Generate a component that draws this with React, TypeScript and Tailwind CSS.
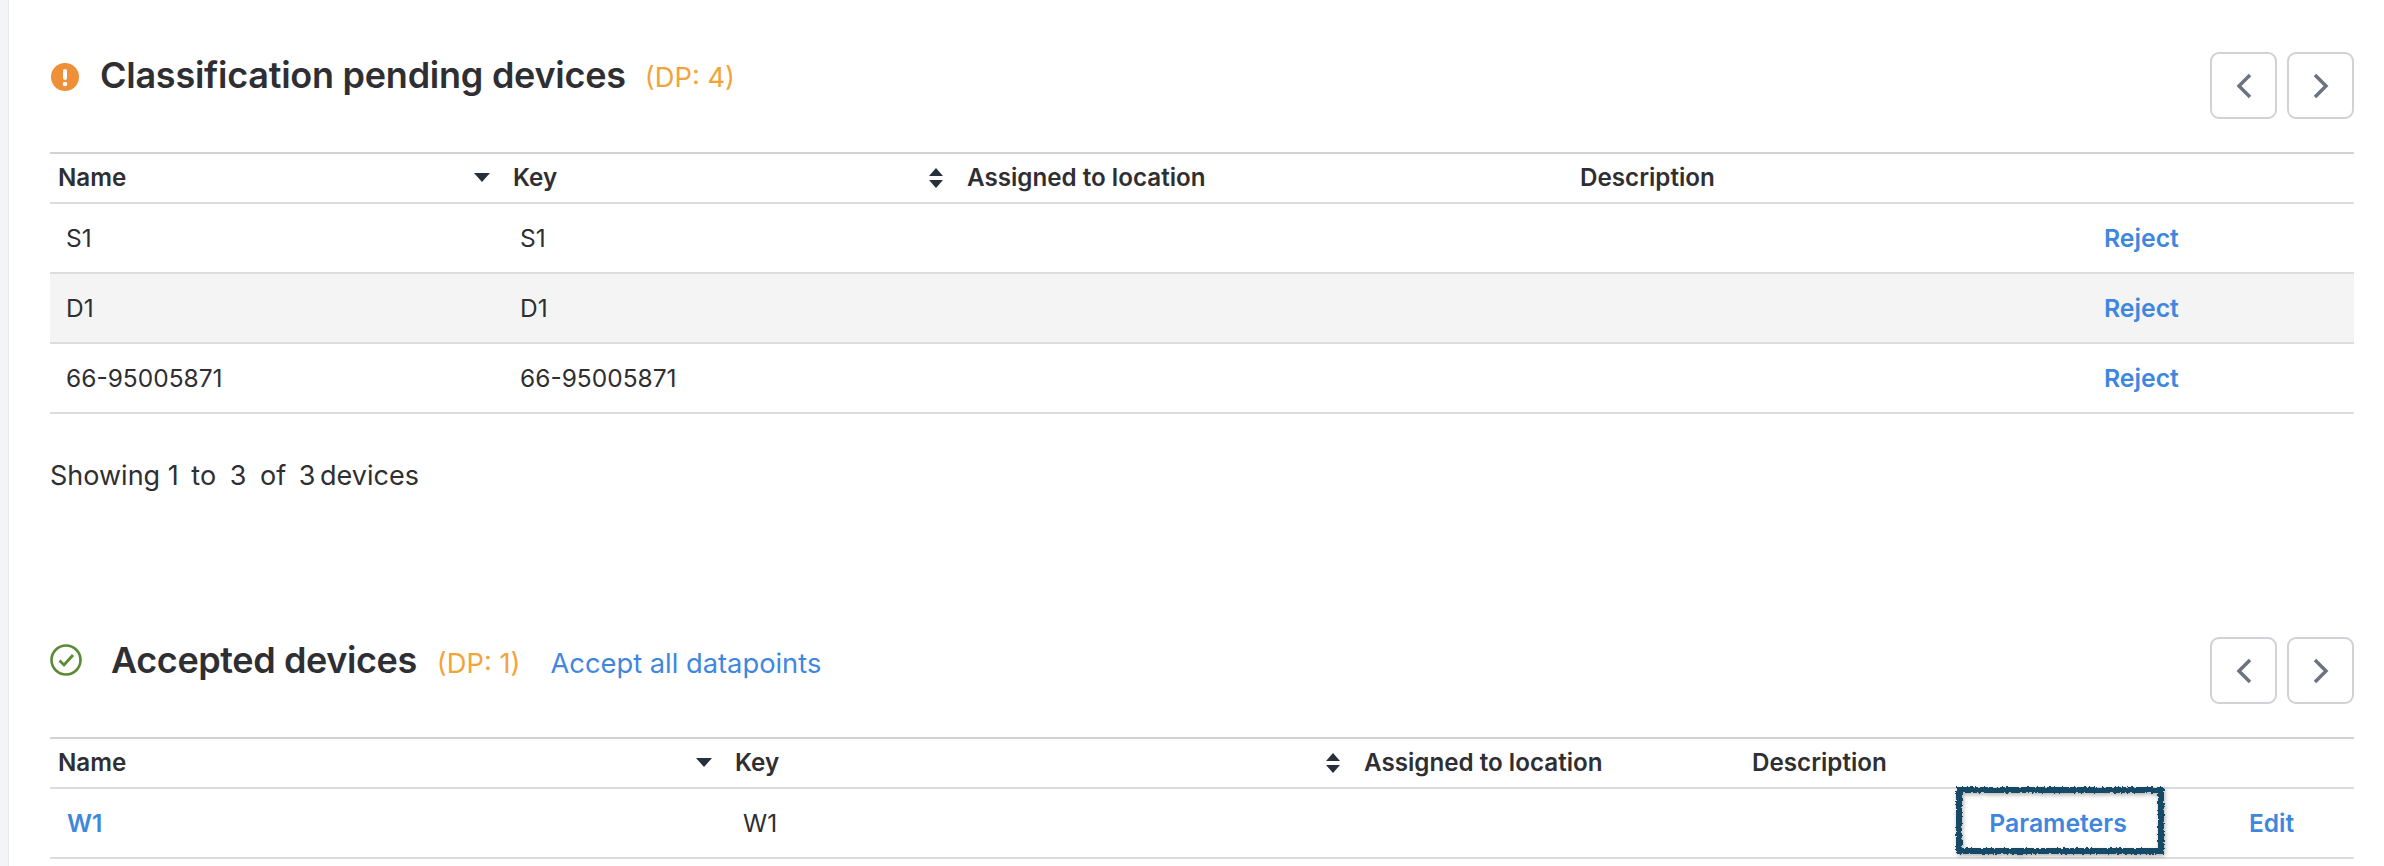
const font = "font-['Inter',sans-serif]";

function Pager() {
  return (
    <div className="flex gap-[10px]">
      <button className="w-[67px] h-[67px] flex items-center justify-center rounded-[9px] border-2 border-[#d1d1d6] bg-white">
        <svg width="18" height="26" viewBox="0 0 18 26" fill="none" stroke="#6b7280" strokeWidth="3.5">
          <path d="M15 2 4 13l11 11" />
        </svg>
      </button>
      <button className="w-[67px] h-[67px] flex items-center justify-center rounded-[9px] border-2 border-[#d1d1d6] bg-white">
        <svg width="18" height="26" viewBox="0 0 18 26" fill="none" stroke="#6b7280" strokeWidth="3.5">
          <path d="M3 2l11 11L3 24" />
        </svg>
      </button>
    </div>
  );
}

function CaretDown() {
  return (
    <svg width="16" height="9" viewBox="0 0 16 9" className="shrink-0">
      <path d="M0 0h16L8 9z" fill="#27303a" />
    </svg>
  );
}

function CaretBoth() {
  return (
    <svg width="16" height="20" viewBox="0 0 16 20" className="shrink-0">
      <path d="M8 0l7 8H1zM1 12h14l-7 8z" fill="#27303a" />
    </svg>
  );
}

function HeadCell({ label, sort }: { label: string; sort?: "down" | "both" }) {
  return (
    <div className="flex items-center justify-between pl-[8px] pr-[15px]">
      <span>{label}</span>
      {sort === "down" && <CaretDown />}
      {sort === "both" && <CaretBoth />}
    </div>
  );
}

const pendingCols = "grid-cols-[455px_454px_613px_532px_250px]";
const acceptedCols = "grid-cols-[677px_629px_388px_212px_209px_189px]";
const pendingRows = [
  { name: "S1", shaded: false },
  { name: "D1", shaded: true },
  { name: "66-95005871", shaded: false },
];

export default function App() {
  return (
    <div className={`${font} flex h-[866px] overflow-hidden bg-white text-[#2f2f33]`}>
      <div className="w-[9px] shrink-0 bg-[#f3f4f6] border-r border-[#e9eaee]" />
      <main className="flex-1 pl-[41px] pr-[30px] pt-[52px]">
        {/* Classification pending */}
        <section>
          <div className="flex items-start justify-between h-[67px]">
            <div className="flex items-center h-[46px]">
              <svg width="28" height="28" viewBox="0 0 28 28" className="ml-[1px] mt-[3px]">
                <circle cx="14" cy="14" r="14" fill="#ef9038" />
                <rect x="12" y="6" width="4" height="11" rx="2" fill="#fff" />
                <circle cx="14" cy="21" r="2.3" fill="#fff" />
              </svg>
              <h2 className="ml-[21px] text-[36px] font-semibold tracking-[-0.25px]">Classification pending devices</h2>
              <span className="ml-[19px] mt-[6px] text-[27.3px] text-[#f2a43a]">(DP: 4)</span>
            </div>
            <Pager />
          </div>
          <div className="mt-[33px] border-t-2 border-[#d1d1d6] text-[24.5px]">
            <div className={`grid ${pendingCols} h-[50px] items-center border-b-2 border-[#dcdcdf] text-[24.2px] font-semibold`}>
              <HeadCell label="Name" sort="down" />
              <HeadCell label="Key" sort="both" />
              <HeadCell label="Assigned to location" />
              <HeadCell label="Description" />
              <div />
            </div>
            {pendingRows.map((row) => (
              <div
                key={row.name}
                className={`grid ${pendingCols} h-[70px] items-center border-b-2 border-[#dcdcdf] ${row.shaded ? "bg-[#f4f4f5]" : ""}`}
              >
                <div className="pl-[16px]">{row.name}</div>
                <div className="pl-[15px]">{row.name}</div>
                <div />
                <div />
                <a className="mt-[2px] text-[24.8px] font-semibold text-[#3f87de]">Reject</a>
              </div>
            ))}
          </div>
          <p className="mt-[46px] text-[27px] leading-[32px]">
            Showing 1<span className="ml-[5px]"> to</span>
            <span className="ml-[6px]"> 3</span>
            <span className="ml-[6px]"> of</span>
            <span className="ml-[5px]"> 3</span>
            <span className="ml-[-3px]"> devices</span>
          </p>
        </section>

        {/* Accepted */}
        <section className="mt-[145px]">
          <div className="flex items-start justify-between h-[67px]">
            <div className="flex items-center h-[46px]">
              <svg width="32" height="32" viewBox="0 0 32 32" fill="none" stroke="#5b8a35" strokeWidth="2.6">
                <circle cx="16" cy="16" r="14.5" />
                <path d="M9.5 16.5l4.5 4.5 9-10" strokeWidth="2.8" />
              </svg>
              <h2 className="ml-[29px] text-[36px] font-semibold tracking-[-0.4px]">Accepted devices</h2>
              <span className="ml-[20px] mt-[8px] text-[27.3px] text-[#f2a43a]">(DP: 1)</span>
              <a className="ml-[30px] mt-[8px] text-[27.3px] text-[#3f87de]">Accept all datapoints</a>
            </div>
            <Pager />
          </div>
          <div className="mt-[33px] border-t-2 border-[#d1d1d6] text-[24.5px]">
            <div className={`grid ${acceptedCols} h-[50px] items-center border-b-2 border-[#dcdcdf] text-[24.2px] font-semibold`}>
              <HeadCell label="Name" sort="down" />
              <HeadCell label="Key" sort="both" />
              <HeadCell label="Assigned to location" />
              <HeadCell label="Description" />
              <div />
              <div />
            </div>
            <div className={`relative grid ${acceptedCols} h-[70px] items-center border-b-2 border-[#dcdcdf]`}>
              <a className="pl-[17px] font-semibold text-[#3f87de]">W1</a>
              <div className="pl-[16px]">W1</div>
              <div />
              <div />
              <a className="mt-[2px] text-center pr-[5px] text-[24.8px] font-semibold text-[#3f87de]">Parameters</a>
              <a className="pl-[84px] font-semibold text-[#3f87de]">Edit</a>
              {/* hand drawn highlight around Parameters */}
              <svg
                className="absolute left-[1904px] top-[-5px] drop-shadow-[1px_2px_2px_rgba(0,0,0,0.3)]"
                width="214"
                height="74"
                viewBox="0 0 214 74"
                fill="none"
              >
                <filter id="rough">
                  <feTurbulence type="fractalNoise" baseFrequency="0.4" numOctaves="2" seed="4" />
                  <feDisplacementMap in="SourceGraphic" scale="4" />
                </filter>
                <rect x="5" y="6" width="202" height="61" stroke="#174a66" strokeWidth="6" filter="url(#rough)" />
              </svg>
            </div>
          </div>
        </section>
      </main>
    </div>
  );
}
